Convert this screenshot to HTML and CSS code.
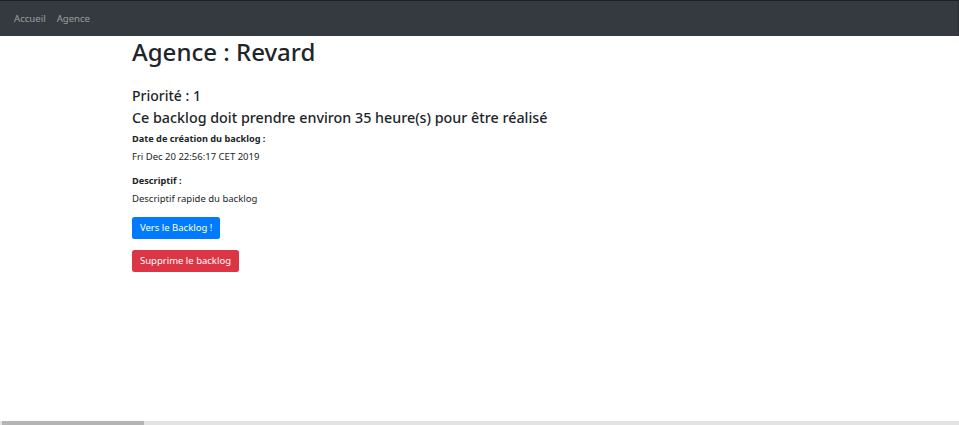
FILE: index.html
```html
<!DOCTYPE html>
<html lang="fr">
<head>
<meta charset="utf-8">
<title>Agence : Revard</title>
<link rel="stylesheet" href="styles.css">
</head>
<body>
<div class="page">
  <nav class="navbar">
    <a class="nav-link" href="#">Accueil</a>
    <a class="nav-link" href="#">Agence</a>
  </nav>
  <main class="content">
    <h1 class="title">Agence : Revard</h1>
    <h5 class="priority">Priorité : 1</h5>
    <h5 class="estimate">Ce backlog doit prendre environ 35 heure(s) pour être réalisé</h5>
    <p class="label">Date de création du backlog :</p>
    <p class="value">Fri Dec 20 22:56:17 CET 2019</p>
    <p class="label">Descriptif :</p>
    <p class="value">Descriptif rapide du backlog</p>
    <div class="actions">
      <a class="btn btn-primary" href="#">Vers le Backlog !</a>
      <a class="btn btn-danger" href="#">Supprime le backlog</a>
    </div>
  </main>
  <div class="hscroll"><div class="hscroll-thumb"></div></div>
</div>
</body>
</html>
```
FILE: styles.css
```css
* { box-sizing: border-box; }
html, body { margin: 0; padding: 0; }
body {
  font-family: "Noto Sans", "Open Sans", sans-serif;
  color: #212529;
  background: #fff;
}
.page {
  height: 100vh;
  display: flex;
  flex-direction: column;
  overflow: hidden;
}
.navbar {
  height: 36px;
  flex: none;
  background: #343a40;
  border-top: 1px solid #1c1f22;
  border-right: 1px solid #2a2e33;
  display: flex;
  align-items: center;
  padding: 0 0 0 14px;
  gap: 11px;
}
.nav-link {
  color: rgba(255,255,255,.5);
  font-size: 9.6px;
  text-decoration: none;
}
.content {
  flex: 1;
  padding-left: 132px;
  display: flex;
  flex-direction: column;
  align-items: flex-start;
}
.title {
  font-size: 24px;
  font-weight: 500;
  line-height: 31px;
  margin: 0 0 20px;
}
.priority, .estimate {
  font-size: 14px;
  font-weight: 500;
  line-height: 17px;
  margin: 0 0 5px;
}
.estimate { font-size: 14.3px; margin-bottom: 6px; }
.label {
  font-size: 9.2px;
  font-weight: 700;
  line-height: 14px;
  margin: 0 0 4px;
}
.value {
  font-size: 9.5px;
  line-height: 14px;
  margin: 0 0 10px;
}
.actions {
  display: flex;
  flex-direction: column;
  align-items: flex-start;
  gap: 11px;
  margin-top: 1px;
}
.btn {
  display: inline-block;
  color: #fff;
  text-decoration: none;
  font-size: 9.5px;
  line-height: 14px;
  height: 22px;
  padding: 4px 8px;
  border-radius: 2.5px;
}
.btn-primary { background: #007bff; }
.btn-danger { background: #dc3545; }
.hscroll {
  height: 4px;
  flex: none;
  background: #e3e3e3;
  padding: 0 815px 0 2px;
}
.hscroll-thumb {
  height: 100%;
  background: #b4b4b4;
}
```
